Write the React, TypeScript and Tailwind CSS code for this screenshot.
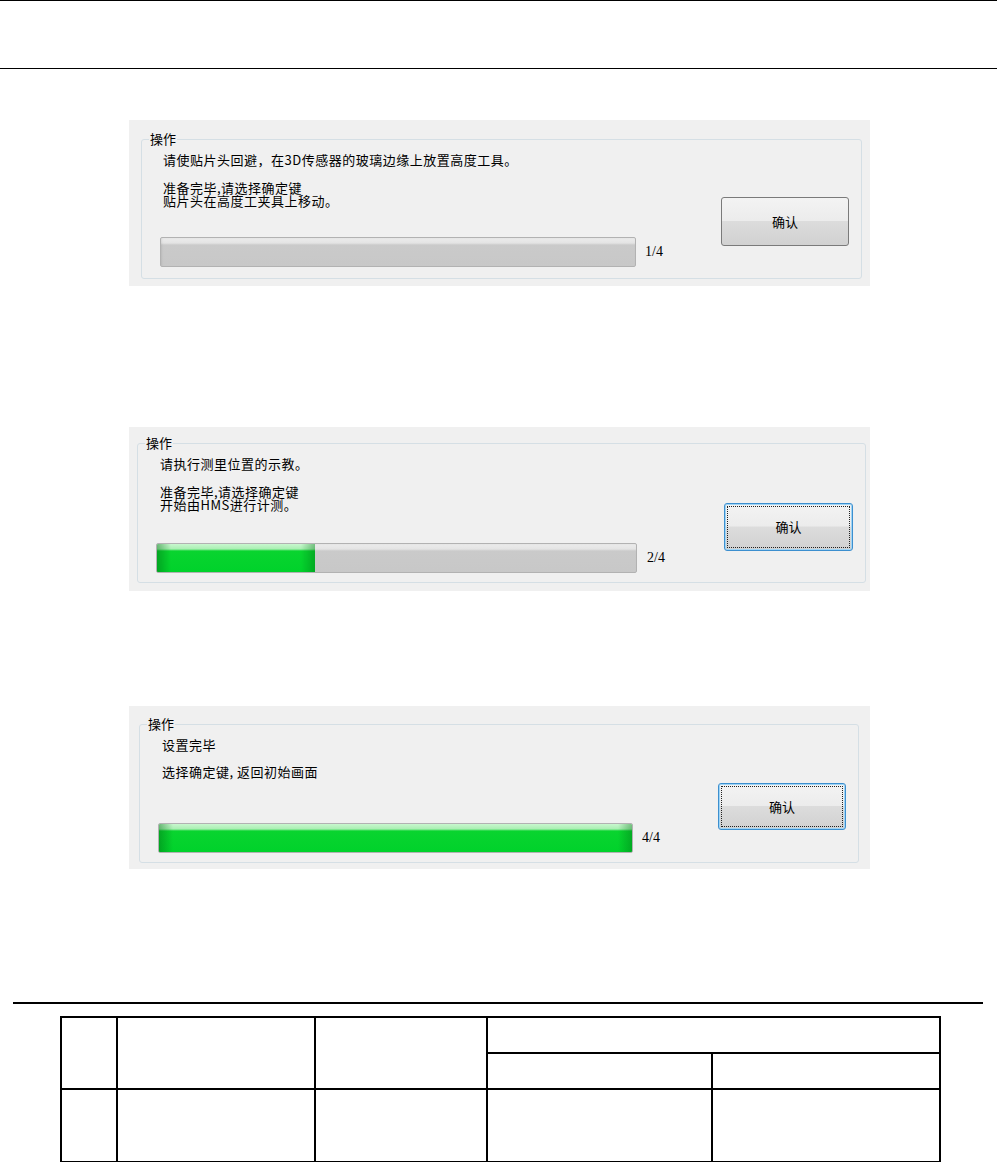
import React from "react";

const cjk = "font-['Noto_Sans_CJK_SC','Noto_Sans',sans-serif]";

function ConfirmButton({ focused, className }: { focused: boolean; className: string }) {
  return (
    <div
      className={
        "flex items-stretch rounded-[3px] border p-[2px] " +
        (focused
          ? "border-[#3c8fcf] shadow-[inset_0_0_0_1px_#9fd4f5] "
          : "border-[#7a7a7a] ") +
        "bg-[linear-gradient(to_bottom,#f3f3f3_0%,#ececec_48%,#dcdcdc_50%,#d1d1d1_100%)] " +
        className
      }
    >
      <div
        className={
          "flex flex-1 items-center justify-center text-[13px] leading-[14px] text-black " +
          cjk +
          (focused ? " border border-dotted border-[#222]" : " border border-transparent")
        }
      >
        确认
      </div>
    </div>
  );
}

function Progress({ pct, widthClass }: { pct: number; widthClass: string }) {
  return (
    <div
      className={
        "h-[30px] overflow-hidden rounded-[2px] border border-[#b2b2b2] bg-[linear-gradient(to_bottom,#ececec_0px,#e4e4e4_5px,#cacaca_7px,#c8c8c8_26px,#d2d2d2_30px)] shadow-[inset_1px_0_2px_rgba(0,0,0,0.08)] " +
        widthClass
      }
    >
      <div
        className="h-full bg-[linear-gradient(to_right,rgba(0,110,20,0.45)_0px,rgba(0,110,20,0)_14px,rgba(0,110,20,0)_calc(100%-14px),rgba(0,110,20,0.4)_100%),linear-gradient(to_bottom,#c9f7cf_0px,#a9efb2_5px,#09d42f_7px,#00d22b_100%)]"
        style={{ width: `${pct}%` }}
      />
    </div>
  );
}

type PanelProps = {
  outerPad: string;
  line1: string;
  block2: React.ReactNode;
  block2Class: string;
  barMt: string;
  pct: number;
  barWidth: string;
  fraction: string;
  fracGap: string;
  focused: boolean;
  btnClass: string;
  heightClass: string;
  textMl: string;
};

function Panel(p: PanelProps) {
  return (
    <div className={"ml-[129px] flex w-[741px] flex-col bg-[#f0f0f0] " + p.heightClass + " " + p.outerPad}>
      <div className="relative flex flex-1 justify-between rounded-[3px] border border-[#d5dfe5]">
        <div
          className={
            "absolute -top-[8px] left-[7px] bg-[#f0f0f0] px-[1px] text-[13px] leading-[14px] text-black " + cjk
          }
        >
          操作
        </div>
        <div className="flex flex-col pl-[18px] pt-[13px]">
          <div className={"text-[13px] leading-[14px] tracking-[0.5px] text-black " + cjk + " " + p.textMl}>{p.line1}</div>
          <div className={"text-[13px] tracking-[0.5px] text-black " + cjk + " " + p.textMl + " " + p.block2Class}>{p.block2}</div>
          <div className={"flex items-center " + p.barMt + " " + p.fracGap}>
            <Progress pct={p.pct} widthClass={p.barWidth} />
            <span className="font-['Liberation_Serif',serif] text-[14px] leading-[14px] text-black">{p.fraction}</span>
          </div>
        </div>
        <div className="pr-[12px]">
          <ConfirmButton focused={p.focused} className={p.btnClass} />
        </div>
      </div>
    </div>
  );
}

export default function App() {
  return (
    <div className="min-h-[1162px] w-[997px] bg-white">
      <div className="h-[69px] border-y border-black" />

      <div className="mt-[51px]">
        <Panel
          outerPad="pt-[19px] pl-[12px] pr-[8px] pb-[7px]"
          heightClass="h-[166px]"
          line1="请使贴片头回避，在3D传感器的玻璃边缘上放置高度工具。"
          block2={
            <>
              <div>准备完毕,请选择确定键</div>
              <div>贴片头在高度工夹具上移动。</div>
            </>
          }
          block2Class="mt-[14px] leading-[13px]"
          barMt="mt-[30px]"
          pct={0}
          barWidth="w-[476px]"
          fraction="1/4"
          fracGap="gap-[9px]"
          focused={false}
          btnClass="mt-[57px] h-[49px] w-[128px]"
          textMl="ml-[3px]"
        />
      </div>

      <div className="mt-[141px]">
        <Panel
          outerPad="pt-[16px] pl-[8px] pr-[4px] pb-[8px]"
          heightClass="h-[164px]"
          line1="请执行测里位置的示教。"
          block2={
            <>
              <div>准备完毕,请选择确定键</div>
              <div>开始由HMS进行计测。</div>
            </>
          }
          block2Class="mt-[14px] leading-[13px]"
          barMt="mt-[32px]"
          pct={33}
          barWidth="w-[481px]"
          fraction="2/4"
          fracGap="gap-[10px]"
          focused={true}
          btnClass="mt-[59px] h-[48px] w-[129px]"
          textMl="ml-[4px]"
        />
      </div>

      <div className="mt-[115px]">
        <Panel
          outerPad="pt-[18px] pl-[10px] pr-[11px] pb-[6px]"
          heightClass="h-[163px]"
          line1="设置完毕"
          block2={<div>选择确定键, 返回初始画面</div>}
          block2Class="mt-[13px] leading-[14px]"
          barMt="mt-[44px]"
          pct={100}
          barWidth="w-[475px]"
          fraction="4/4"
          fracGap="gap-[9px]"
          focused={true}
          btnClass="mt-[58px] h-[47px] w-[128px]"
          textMl="ml-[4px]"
        />
      </div>

      <div className="ml-[13px] mt-[133px] h-[2px] w-[970px] bg-black" />

      <table className="ml-[60px] mt-[12px] border-collapse">
        <tbody>
          <tr className="h-[36px]">
            <td rowSpan={2} className="w-[56px] border-2 border-black" />
            <td rowSpan={2} className="w-[198px] border-2 border-black" />
            <td rowSpan={2} className="w-[172px] border-2 border-black" />
            <td colSpan={2} className="border-2 border-black" />
          </tr>
          <tr className="h-[36px]">
            <td className="w-[225px] border-2 border-black" />
            <td className="w-[228px] border-2 border-black" />
          </tr>
          <tr className="h-[73px]">
            <td className="border-2 border-black" />
            <td className="border-2 border-black" />
            <td className="border-2 border-black" />
            <td className="border-2 border-black" />
            <td className="border-2 border-black" />
          </tr>
        </tbody>
      </table>
    </div>
  );
}
